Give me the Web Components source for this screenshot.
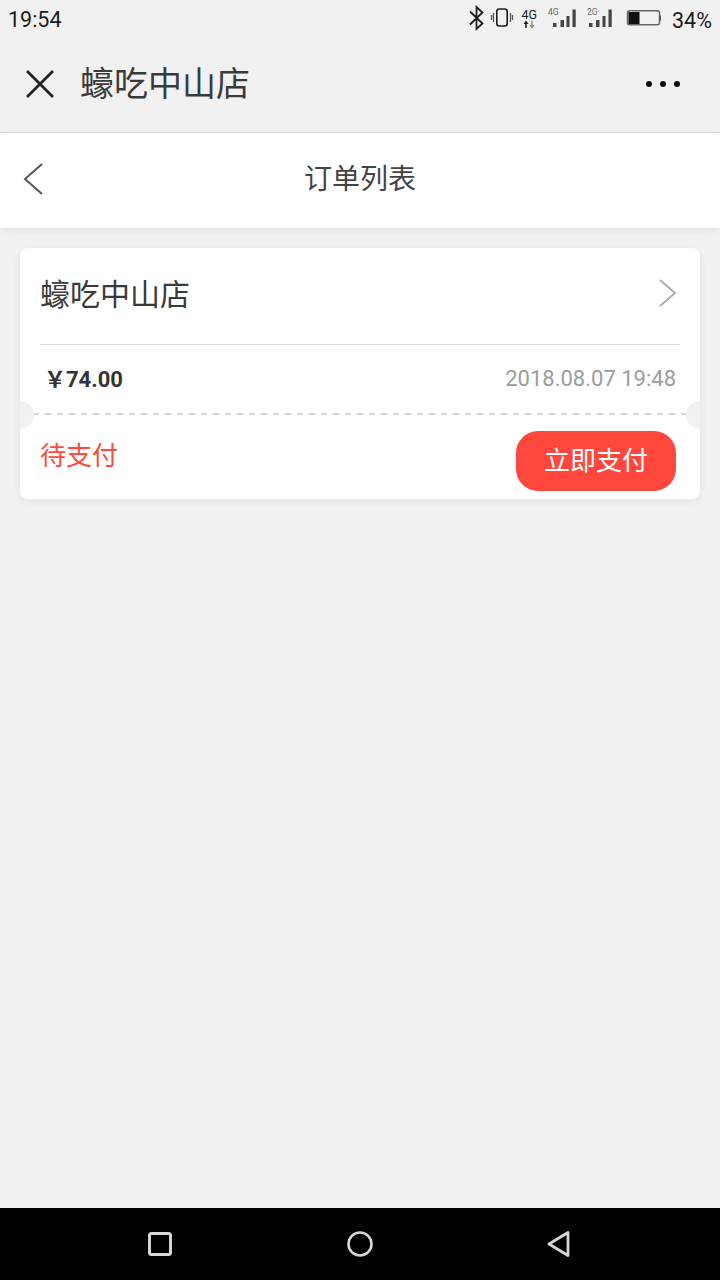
<!DOCTYPE html>
<html lang="zh">
<head>
<meta charset="utf-8">
<title>订单列表</title>
<style>
  html, body { margin: 0; padding: 0; background: #f1f1f1; }
  body { width: 720px; height: 1280px; overflow: hidden; display: flex; flex-direction: column; font-family: Roboto, "Noto Sans CJK SC", sans-serif; }
  page-body { flex: 1; }
</style>
</head>
<body>
<status-bar></status-bar>
<web-nav>蠔吃中山店</web-nav>
<sub-header>订单列表</sub-header>
<page-body>
  <order-card shop="蠔吃中山店" price="74.00" time="2018.08.07 19:48" state="待支付" action="立即支付"></order-card>
</page-body>
<system-nav></system-nav>

<script>
class StatusBar extends HTMLElement {
  constructor() {
    super();
    this.attachShadow({ mode: "open" });
    this.shadowRoot.innerHTML = `
      <style>
        :host { display: flex; height: 40px; align-items: center; justify-content: space-between; color: #1c1c1c; }
        .time { font: 21.5px/40px Roboto, sans-serif; margin-left: 8px; }
        .right { display: flex; align-items: center; height: 40px; position: relative; width: 260px; }
        .pct { position: absolute; left: 212px; top: 1px; font: 21.5px/40px Roboto, sans-serif; }
        svg { display: block; position: absolute; left: 0; top: 0; }
        text { font-family: Roboto, sans-serif; }
      </style>
      <span class="time">19:54</span>
      <div class="right">
        <svg width="205" height="40" viewBox="460 0 205 40">
          <path d="M470 11.5l12.5 12-6 5.5V7l6 5.5-12.5 12" fill="none" stroke="#1c1c1c" stroke-width="1.8"/>
          <rect x="496.8" y="9" width="10.4" height="17" rx="2.5" fill="none" stroke="#1c1c1c" stroke-width="1.6"/>
          <path d="M493.5 13v9M491.5 15v5M510.5 13v9M512.5 15v5" stroke="#555" stroke-width="1.3"/>
          <text x="521.5" y="19" font-size="12.5" fill="#222">4G</text>
          <path d="M526 28v-5" stroke="#222" stroke-width="1.6"/>
          <path d="M523.5 24l2.5-3.5 2.5 3.5z" fill="#222"/>
          <path d="M532 21v5" stroke="#888" stroke-width="1.4"/>
          <path d="M529.5 25l2.5 3.5 2.5-3.5z" fill="#888"/>
          <text x="548" y="15" font-size="8.5" fill="#666">4G</text>
          <path d="M553 23h3.5v4H553zM560.5 20h3.5v7h-3.5zM566.5 16h3v11h-3zM572.5 9.5h3.2V27h-3.2z" fill="#444"/>
          <text x="587" y="15" font-size="8.5" fill="#666">2G</text>
          <path d="M589 23h3.5v4H589zM596 20h3.5v7H596zM602.5 16h3v11h-3zM608.5 9.5h3.2V27h-3.2z" fill="#444"/>
          <rect x="627.5" y="10.8" width="32" height="14" rx="2" fill="none" stroke="#666" stroke-width="1.5"/>
          <rect x="628.5" y="12" width="11" height="12" fill="#111"/>
          <rect x="659.5" y="15.5" width="1.5" height="5" fill="#555"/>
        </svg>
        <span class="pct">34%</span>
      </div>
    `;
  }
}
customElements.define("status-bar", StatusBar);

class WebNav extends HTMLElement {
  constructor() {
    super();
    this.attachShadow({ mode: "open" });
    this.shadowRoot.innerHTML = `
      <style>
        :host { display: flex; height: 93px; align-items: center; box-sizing: border-box; padding: 0 40px 4px 26px; border-bottom: 1px solid #dedede; }
        svg { display: block; flex: none; }
        .title { flex: 1; margin-left: 26px; margin-top: -4px; font: 34px/44px "Noto Sans CJK SC", sans-serif; color: #3a3a3a; }
        .dots { display: flex; gap: 8px; }
        .dots i { width: 6px; height: 6px; border-radius: 50%; background: #111; }
      </style>
      <svg width="28" height="28" viewBox="0 0 28 28"><path d="M1 1l26 26M27 1L1 27" stroke="#222" stroke-width="2.8" fill="none"/></svg>
      <span class="title"><slot></slot></span>
      <div class="dots"><i></i><i></i><i></i></div>
    `;
  }
}
customElements.define("web-nav", WebNav);

class SubHeader extends HTMLElement {
  constructor() {
    super();
    this.attachShadow({ mode: "open" });
    this.shadowRoot.innerHTML = `
      <style>
        :host { display: flex; position: relative; height: 95px; box-sizing: border-box; padding-bottom: 8px; background: #fff; align-items: center; justify-content: center; box-shadow: 0 2px 8px rgba(0,0,0,.07); font: 28px/40px "Noto Sans CJK SC", sans-serif; color: #444; }
        svg { position: absolute; left: 22px; top: 30px; }
      </style>
      <svg width="21" height="32" viewBox="0 0 21 32"><path d="M20 1L3 16l17 15" fill="none" stroke="#555" stroke-width="2"/></svg>
      <slot></slot>
    `;
  }
}
customElements.define("sub-header", SubHeader);

class PageBody extends HTMLElement {
  constructor() {
    super();
    this.attachShadow({ mode: "open" });
    this.shadowRoot.innerHTML = `
      <style>:host { display: block; padding: 20px 20px 0; }</style>
      <slot></slot>
    `;
  }
}
customElements.define("page-body", PageBody);

class OrderCard extends HTMLElement {
  constructor() {
    super();
    this.attachShadow({ mode: "open" });
    this.shadowRoot.innerHTML = `
      <style>
        :host { display: block; position: relative; height: 251px; background: #fff; border-radius: 8px; box-shadow: 0 2px 8px rgba(0,0,0,.06); overflow: hidden; }
        .top { display: flex; align-items: center; justify-content: space-between; height: 96px; margin: 0 20px; border-bottom: 1px solid #d9d9d9; }
        .shop { font: 30px/44px "Noto Sans CJK SC", sans-serif; color: #3a3a3a; margin-bottom: 9px; }
        .chev { display: block; margin: 0 3px 6px 0; }
        .mid { display: flex; justify-content: space-between; align-items: center; height: 68px; padding: 0 24px 0 24px; }
        .dash { height: 2px; margin-left: 13px; background: repeating-linear-gradient(90deg, #d6d6d6 0 6px, transparent 6px 12px); }
        .price { font: 700 22px/30px Roboto, "Noto Sans CJK SC", sans-serif; color: #333; margin-top: 2px; }
        .time { font: 22px/30px Roboto, sans-serif; color: #9c9c9c; }
        .bottom { display: flex; justify-content: space-between; padding: 16px 24px 0 20px; }
        .state { font: 26px/48px "Noto Sans CJK SC", sans-serif; color: #ff4a40; margin-top: -1px; }
        .pay { display: flex; align-items: center; justify-content: center; box-sizing: border-box; padding-bottom: 5px; width: 160px; height: 60px; border-radius: 22px; background: #ff473d; color: #fff; font: 26px/40px "Noto Sans CJK SC", sans-serif; }
        .notch { position: absolute; top: 153px; width: 28px; height: 28px; border-radius: 50%; background: #f1f1f1; }
        .notch.l { left: -14px; }
        .notch.r { right: -14px; }
      </style>
      <div class="top">
        <span class="shop">${this.getAttribute("shop")}</span>
        <svg class="chev" width="18" height="28" viewBox="0 0 18 28"><path d="M1 1l15 13L1 27" fill="none" stroke="#adadad" stroke-width="2"/></svg>
      </div>
      <div class="mid">
        <span class="price">￥${this.getAttribute("price")}</span>
        <span class="time">${this.getAttribute("time")}</span>
      </div>
      <div class="dash"></div>
      <div class="bottom">
        <span class="state">${this.getAttribute("state")}</span>
        <div class="pay">${this.getAttribute("action")}</div>
      </div>
      <span class="notch l"></span>
      <span class="notch r"></span>
    `;
  }
}
customElements.define("order-card", OrderCard);

class SystemNav extends HTMLElement {
  constructor() {
    super();
    this.attachShadow({ mode: "open" });
    this.shadowRoot.innerHTML = `
      <style>
        :host { display: flex; flex: none; height: 72px; background: #000; align-items: center; justify-content: space-between; padding: 0 149px 0 148px; box-sizing: border-box; }
        svg { display: block; }
      </style>
      <svg width="26" height="24" viewBox="0 0 26 24"><rect x="1.5" y="1.5" width="21" height="21" rx="2" fill="none" stroke="#d6d6d6" stroke-width="3"/></svg>
      <svg width="26" height="26" viewBox="0 0 26 26"><circle cx="13" cy="13" r="11.5" fill="none" stroke="#d6d6d6" stroke-width="2.6"/></svg>
      <svg width="25" height="26" viewBox="0 0 25 26"><path d="M22 1.5v23L3 13z" fill="none" stroke="#d6d6d6" stroke-width="2.8" stroke-linejoin="round"/></svg>
    `;
  }
}
customElements.define("system-nav", SystemNav);
</script>
</body>
</html>
